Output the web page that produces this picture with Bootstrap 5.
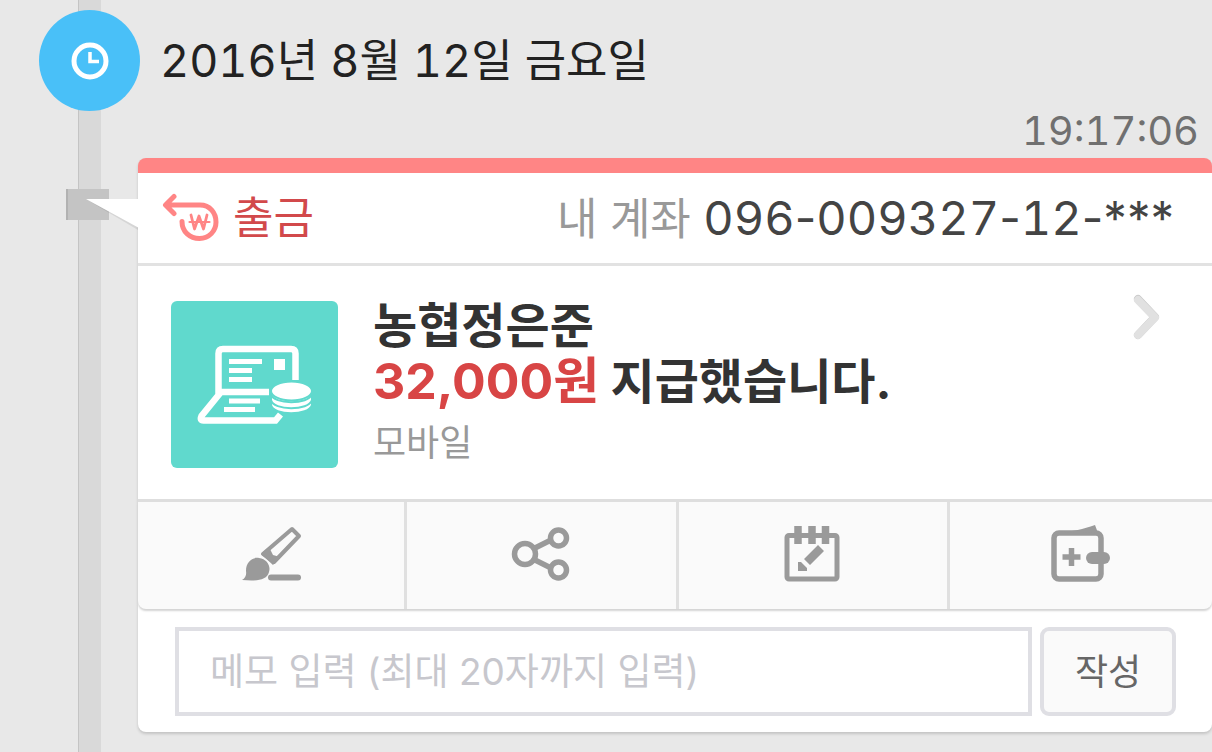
<!DOCTYPE html>
<html lang="ko">
<head>
<meta charset="utf-8">
<meta name="viewport" content="width=device-width, initial-scale=1">
<title>입출금 알림</title>
<link href="https://cdn.jsdelivr.net/npm/bootstrap@5.3.0/dist/css/bootstrap.min.css" rel="stylesheet">
<style>
  body {
    background: #e8e8e8;
    color: #222;
    font-family: Inter, "Noto Sans CJK KR", sans-serif;
  }
  .digits { font-variant-numeric: tabular-nums; }
  /* vertical rail that runs behind the whole timeline */
  .timeline {
    background:
      linear-gradient(#c4c4c4, #c4c4c4) 78px 0 / 1px 100% no-repeat,
      linear-gradient(#d9d9d9, #d9d9d9) 79px 0 / 22px 100% no-repeat;
  }
  .day-head { padding: 10px 0 0 39px; gap: 20px; }
  .day-dot { width: 101px; height: 101px; background: #49c0f8; }
  .day-title { font-size: 45px; line-height: 58px; font-weight: 400; }
  .entry { margin-left: 138px; }
  .entry-time { font-size: 40px; line-height: 40px; color: #707070; padding-right: 13px; margin-bottom: 7px; }
  .slip {
    background: #fff;
    border-top: 15px solid #ff8585;
    border-radius: 8px;
    box-shadow: 0 2px 3px rgba(0, 0, 0, .16);
  }
  .rail-mark { left: -72px; top: 16px; width: 43px; height: 31px; background: #c4c4c4; border-left: 2px solid #b2b2b2; }
  .slip-tail { left: -53px; top: 24px; }
  .slip-head { height: 93px; border-bottom: 3px solid #e2e2e2; padding: 0 38px 0 24px; font-size: 44px; line-height: 56px; }
  .kind { color: #d2494b; gap: 13px; }
  .owner { color: #999; }
  .account { color: #444; font-size: 47px; }
  .slip-body { height: 236px; border-bottom: 3px solid #dedede; padding: 4px 50px 0 33px; gap: 35px; color: inherit; }
  .tile { width: 167px; height: 167px; border-radius: 6px; background: #60d9cd; }
  .deal { font-size: 48px; line-height: 56px; font-weight: 700; color: #333; }
  .amount { color: #d84545; font-size: 50px; line-height: 48px; }
  .channel { font-size: 36px; line-height: 66px; color: #999; }
  .chevron { margin-top: 22px; }
  .tools {
    display: grid;
    grid-template-columns: 269fr 272fr 271fr 262fr;
    height: 107px;
    background: #fafafa;
    border-radius: 0 0 8px 8px;
    box-shadow: 0 2px 2px #d4d4d4;
    overflow: hidden;
  }
  .tool { border: 0; border-right: 3px solid #e0e0e0; background: none; padding: 0 0 4px; }
  .tool:last-child { border-right: 0; }
  .memo { padding: 18px 36px 16px 37px; gap: 8px; }
  .memo-box, .memo-send { height: 89px; border: 4px solid #dfdfe4; font-size: 36px; line-height: 48px; }
  .memo-box { border-radius: 0; padding: 0 31px; color: #444; min-width: 0; font-size: 37px; }
  .memo-box::placeholder { color: #c7c7cd; opacity: 1; }
  .memo-send { width: 136px; border-radius: 9px; background: #fafafa; color: #666; padding: 0; }
</style>
</head>
<body>
<main class="timeline min-vh-100">
  <header class="day-head d-flex align-items-center">
    <span class="day-dot rounded-circle d-flex align-items-center justify-content-center flex-shrink-0">
      <svg width="38" height="38" viewBox="0 0 38 38" fill="none" stroke="#fff" aria-hidden="true">
        <circle cx="19" cy="19" r="16" stroke-width="5"/>
        <path d="M19 10v9.500h9" stroke-width="3.500"/>
      </svg>
    </span>
    <h1 class="day-title digits m-0">2016년 8월 12일 금요일</h1>
  </header>

  <article class="entry">
    <div class="entry-time digits text-end"><time datetime="2016-08-12T19:17:06">19:17:06</time></div>
    <div class="slip position-relative">
      <span class="rail-mark position-absolute"></span>
      <svg class="slip-tail position-absolute" width="54" height="36" viewBox="0 0 54 36" aria-hidden="true">
        <path d="M4 4l49 29v-4z" fill="#000" fill-opacity=".08"/>
        <path d="M1 2h53v29z" fill="#fff"/>
      </svg>

      <div class="slip-head d-flex align-items-center justify-content-between">
        <div class="kind d-flex align-items-center">
          <svg width="58" height="50" viewBox="0 0 58 50" fill="none" stroke="#ff8585" stroke-linecap="round" stroke-linejoin="round" aria-hidden="true">
            <path d="M12 3.500L3.500 12 12 20.500M4 12h34c10 0 16 8 16 17S47 45.500 37.500 45.500 20 39 20 28.500" stroke-width="5"/>
            <path d="M29 22l3.500 14L37 23l4.500 13L45 22" stroke-width="2.800"/>
            <path d="M27.500 29h20" stroke-width="2.200"/>
          </svg>
          <span>출금</span>
        </div>
        <div><span class="owner">내 계좌</span> <span class="account"><span class="digits">096</span>-<span class="digits">009327</span>-<span class="digits">12</span>-***</span></div>
      </div>

      <a href="#detail" class="slip-body d-flex align-items-center text-decoration-none">
        <span class="tile d-flex align-items-center justify-content-center flex-shrink-0">
          <svg width="167" height="167" viewBox="0 0 167 167" fill="none" stroke="#fff" aria-hidden="true">
            <path d="M124.500 79V52.500q0-4.500-4.500-4.500H52q-4.500 0-4.500 4.500V91H98M50 91L30.500 115q-2 4.500 2 4.500h72l5-6" stroke-width="6.500"/>
            <path d="M58 60.500h33M58 69.500h23M58 78.500h23M58 100h31M53 108.500h31" stroke-width="5"/>
            <path d="M103 58h11v11h-11z" fill="#fff" stroke="none"/>
            <g fill="#fff" stroke="#60d9cd" stroke-width="2">
              <path d="M100 95v9c2 11 38 11 41 0v-9z"/>
              <path d="M100 92v7c2 11 38 11 41 0v-7z"/>
              <path d="M100 88v5c2 11 38 11 41 0v-5z"/>
              <ellipse cx="120.500" cy="90" rx="20.500" ry="9.500"/>
            </g>
          </svg>
        </span>
        <span class="flex-grow-1 pt-1">
          <span class="deal d-block">농협정은준</span>
          <span class="deal d-block"><span class="amount">32,000원</span> 지급했습니다.</span>
          <span class="channel d-block">모바일</span>
        </span>
        <svg class="chevron align-self-start flex-shrink-0" width="32" height="50" viewBox="0 0 32 50" fill="none" stroke-linecap="round" stroke-linejoin="round" aria-hidden="true">
          <path d="M8 7l17 18L8 43" stroke="#cacaca" stroke-width="8"/>
          <path d="M8 8l17 17.500L8 43" stroke="#e1e1e1" stroke-width="8"/>
        </svg>
      </a>

      <div class="tools" role="group" aria-label="거래 도구">
        <button type="button" class="tool" aria-label="꾸미기">
          <svg width="66" height="56" viewBox="-4 0 66 56" aria-hidden="true">
            <path d="M0 54q5-3 4-9c0-9 6-14 13-13 8 1 12 8 10 14-2 9-14 9-27 8z" fill="#9a9a9a"/>
            <path d="M29 51.500h27" stroke="#9a9a9a" stroke-width="6" stroke-linecap="round"/>
            <path d="M21 28L50 3l7 7L32 36z" fill="none" stroke="#9a9a9a" stroke-width="4" stroke-linejoin="round"/>
            <path d="M19 28l8-7 4 8 7 2-7 8z" fill="#9a9a9a"/>
          </svg>
        </button>
        <button type="button" class="tool" aria-label="공유">
          <svg width="62" height="56" viewBox="0 0 62 56" fill="none" stroke="#9a9a9a" stroke-width="5.500" aria-hidden="true">
            <circle cx="14" cy="28" r="10.500"/>
            <circle cx="47.500" cy="12" r="8"/>
            <circle cx="47.500" cy="44" r="8"/>
            <path d="M24 22l16-8M24 34l16 8"/>
          </svg>
        </button>
        <button type="button" class="tool" aria-label="일정">
          <svg width="58" height="56" viewBox="0 0 58 56" aria-hidden="true">
            <rect x="3" y="9.500" width="50" height="43.500" rx="2" fill="none" stroke="#9a9a9a" stroke-width="5"/>
            <path d="M14 0v18M28 0v18M41.500 0v18" stroke="#9a9a9a" stroke-width="7.500"/>
            <path d="M34 19l6 6-14 14-6-6zM14 45v-9h3l6 6v3z" fill="#9a9a9a"/>
          </svg>
        </button>
        <button type="button" class="tool" aria-label="가계부">
          <svg width="60" height="58" viewBox="0 0 60 58" aria-hidden="true">
            <rect x="3" y="8" width="47" height="46" rx="5" fill="none" stroke="#9a9a9a" stroke-width="5.500"/>
            <path d="M8 7C22 7 32 4 44 0l3 8z" fill="#9a9a9a"/>
            <path d="M41 33h12" stroke="#9a9a9a" stroke-width="12" stroke-linecap="round"/>
            <path d="M20.500 23v18M11.500 32h18" stroke="#9a9a9a" stroke-width="5.500"/>
          </svg>
        </button>
      </div>

      <form class="memo d-flex">
        <input type="text" class="memo-box form-control" placeholder="메모 입력 (최대 20자까지 입력)" aria-label="메모 입력">
        <button type="button" class="memo-send btn flex-shrink-0">작성</button>
      </form>
    </div>
  </article>
</main>
<script src="https://cdn.jsdelivr.net/npm/bootstrap@5.3.0/dist/js/bootstrap.bundle.min.js"></script>
</body>
</html>
